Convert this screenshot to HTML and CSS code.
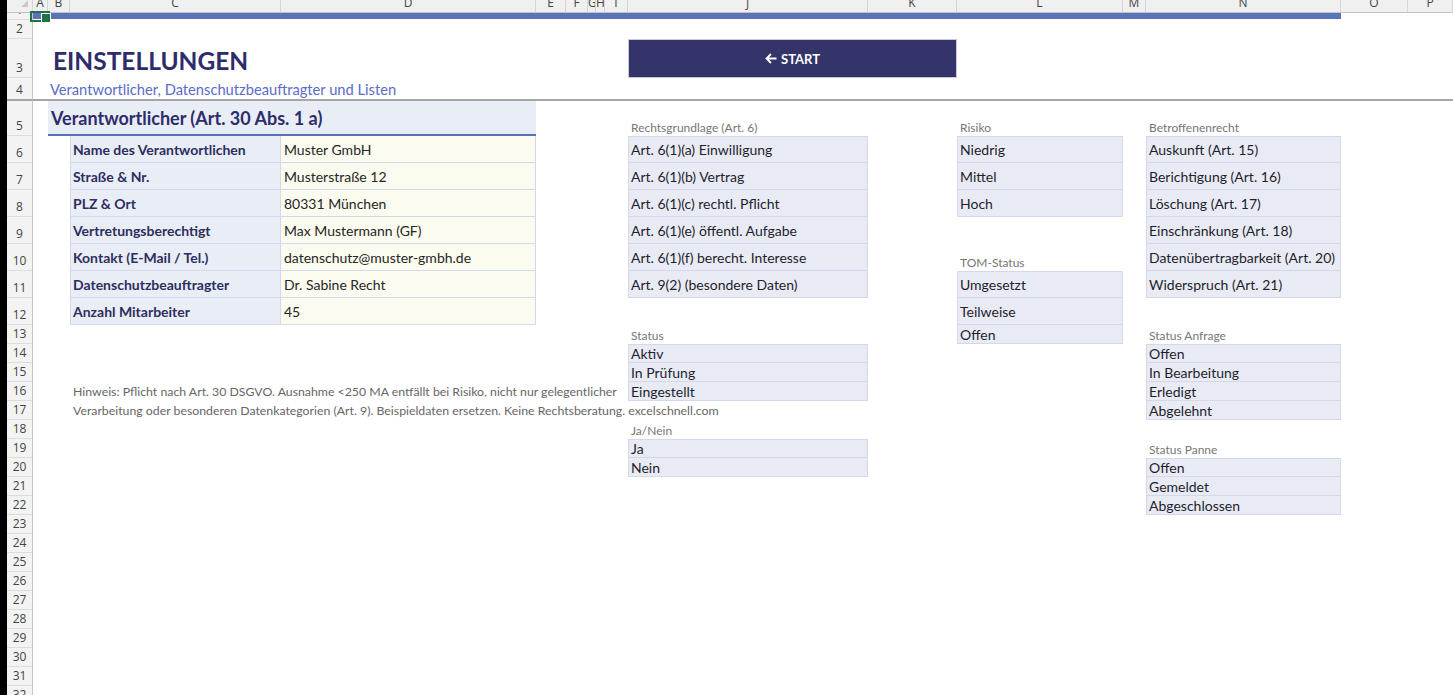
FILE: index.html
```html
<!DOCTYPE html>
<html lang="de">
<head>
    <meta charset="UTF-8">
    <meta name="viewport" content="width=device-width, initial-scale=1.0">
    <title>Einstellungen</title>
    <link rel="stylesheet" href="styles.css">
</head>
<body>
    <div class="window">
        <div class="edge"></div>
        <div class="sheet">
            <!-- Spaltenköpfe -->
            <div class="ch corner"></div>
            <div class="ch">A</div>
            <div class="ch">B</div>
            <div class="ch">C</div>
            <div class="ch">D</div>
            <div class="ch">E</div>
            <div class="ch">F</div>
            <div class="ch">G</div>
            <div class="ch">H</div>
            <div class="ch">I</div>
            <div class="ch">J</div>
            <div class="ch">K</div>
            <div class="ch">L</div>
            <div class="ch">M</div>
            <div class="ch">N</div>
            <div class="ch">O</div>
            <div class="ch">P</div>

            <!-- Zeilenköpfe -->
            <div class="rh">1</div>
            <div class="rh">2</div>
            <div class="rh">3</div>
            <div class="rh thick">4</div>
            <div class="rh">5</div>
            <div class="rh">6</div>
            <div class="rh">7</div>
            <div class="rh">8</div>
            <div class="rh">9</div>
            <div class="rh">10</div>
            <div class="rh">11</div>
            <div class="rh">12</div>
            <div class="rh">13</div>
            <div class="rh">14</div>
            <div class="rh">15</div>
            <div class="rh">16</div>
            <div class="rh">17</div>
            <div class="rh">18</div>
            <div class="rh">19</div>
            <div class="rh">20</div>
            <div class="rh">21</div>
            <div class="rh">22</div>
            <div class="rh">23</div>
            <div class="rh">24</div>
            <div class="rh">25</div>
            <div class="rh">26</div>
            <div class="rh">27</div>
            <div class="rh">28</div>
            <div class="rh">29</div>
            <div class="rh">30</div>
            <div class="rh">31</div>
            <div class="rh">32</div>

            <div class="band"></div>
            <div class="sel"></div>
            <div class="rule"></div>

            <!-- Kopfbereich -->
            <h1 class="title">EINSTELLUNGEN</h1>
            <button class="start">
                <svg width="12" height="11" viewBox="0 0 12 11"><path d="M6 1 L1.5 5.5 L6 10 M1.5 5.5 H11.5" fill="none" stroke="#fff" stroke-width="1.8"/></svg>
                START
            </button>
            <div class="subtitle">Verantwortlicher, Datenschutzbeauftragter und Listen</div>

            <!-- Verantwortlicher -->
            <div class="section">Verantwortlicher (Art. 30 Abs. 1 a)</div>
            <div class="lab r6">Name des Verantwortlichen</div>
            <div class="val r6">Muster GmbH</div>
            <div class="lab r7">Straße &amp; Nr.</div>
            <div class="val r7">Musterstraße 12</div>
            <div class="lab r8">PLZ &amp; Ort</div>
            <div class="val r8">80331 München</div>
            <div class="lab r9">Vertretungsberechtigt</div>
            <div class="val r9">Max Mustermann (GF)</div>
            <div class="lab r10">Kontakt (E-Mail / Tel.)</div>
            <div class="val r10">datenschutz@muster-gmbh.de</div>
            <div class="lab r11">Datenschutzbeauftragter</div>
            <div class="val r11">Dr. Sabine Recht</div>
            <div class="lab r12">Anzahl Mitarbeiter</div>
            <div class="val r12">45</div>

            <div class="note r16">Hinweis: Pflicht nach Art. 30 DSGVO. Ausnahme &lt;250 MA entfällt bei Risiko, nicht nur gelegentlicher</div>
            <div class="note r17">Verarbeitung oder besonderen Datenkategorien (Art. 9). Beispieldaten ersetzen. Keine Rechtsberatung. excelschnell.com</div>

            <!-- Listen Spalte J -->
            <div class="cap cj r5">Rechtsgrundlage (Art. 6)</div>
            <div class="li cj r6 top">Art. 6(1)(a) Einwilligung</div>
            <div class="li cj r7">Art. 6(1)(b) Vertrag</div>
            <div class="li cj r8">Art. 6(1)(c) rechtl. Pflicht</div>
            <div class="li cj r9">Art. 6(1)(e) öffentl. Aufgabe</div>
            <div class="li cj r10">Art. 6(1)(f) berecht. Interesse</div>
            <div class="li cj r11">Art. 9(2) (besondere Daten)</div>

            <div class="cap cj r13">Status</div>
            <div class="li cj r14 top">Aktiv</div>
            <div class="li cj r15">In Prüfung</div>
            <div class="li cj r16">Eingestellt</div>

            <div class="cap cj r18">Ja/Nein</div>
            <div class="li cj r19 top">Ja</div>
            <div class="li cj r20">Nein</div>

            <!-- Listen Spalte L -->
            <div class="cap cl r5">Risiko</div>
            <div class="li cl r6 top">Niedrig</div>
            <div class="li cl r7">Mittel</div>
            <div class="li cl r8">Hoch</div>

            <div class="cap cl r10">TOM-Status</div>
            <div class="li cl r11 top">Umgesetzt</div>
            <div class="li cl r12">Teilweise</div>
            <div class="li cl r13">Offen</div>

            <!-- Listen Spalte N -->
            <div class="cap cn r5">Betroffenenrecht</div>
            <div class="li cn r6 top">Auskunft (Art. 15)</div>
            <div class="li cn r7">Berichtigung (Art. 16)</div>
            <div class="li cn r8">Löschung (Art. 17)</div>
            <div class="li cn r9">Einschränkung (Art. 18)</div>
            <div class="li cn r10">Datenübertragbarkeit (Art. 20)</div>
            <div class="li cn r11">Widerspruch (Art. 21)</div>

            <div class="cap cn r13">Status Anfrage</div>
            <div class="li cn r14 top">Offen</div>
            <div class="li cn r15">In Bearbeitung</div>
            <div class="li cn r16">Erledigt</div>
            <div class="li cn r17">Abgelehnt</div>

            <div class="cap cn r19">Status Panne</div>
            <div class="li cn r20 top">Offen</div>
            <div class="li cn r21">Gemeldet</div>
            <div class="li cn r22">Abgeschlossen</div>
        </div>
    </div>
</body>
</html>
```

FILE: styles.css
```css
* {
    box-sizing: border-box;
}
body {
    margin: 0;
    background: #fff;
    font-family: Lato, "Liberation Sans", sans-serif;
    color: #1f1f2e;
    overflow: hidden;
}
.window {
    display: flex;
    height: 695px;
}
.edge {
    flex: none;
    width: 7px;
    background: #000;
}

/* Tabellenblatt: Spalten und Zeilen wie in Excel */
.sheet {
    flex: 1;
    display: grid;
    grid-template-columns:
        [rh] 26px [a] 15px [b] 22px [c] 211px [d] 255px [e] 30px [f] 22px
        [g] 8px [h] 9px [i] 23px [j] 240px [k] 89px [l] 166px [m] 23px
        [n] 195px [o] 67px [p] 1fr;
    grid-template-rows:
        [hdr] 13px [r1] 7px [r2] 19px [r3] 39px [r4] 23px [r5] 35px
        [r6] 27px [r7] 27px [r8] 27px [r9] 27px [r10] 27px [r11] 27px [r12] 27px
        [r13] 19px [r14] 19px [r15] 19px [r16] 19px [r17] 19px [r18] 19px
        [r19] 19px [r20] 19px [r21] 19px [r22] 19px repeat(10, 19px);
}

.ch {
    grid-row: hdr;
    background: #f0f0f0;
    border-right: 1px solid #d6d6d6;
    border-bottom: 1px solid #c2c2c2;
    font: 12px "Open Sans", sans-serif;
    line-height: 5px;
    color: #444;
    text-align: center;
    white-space: nowrap;
    overflow: hidden;
}
.corner {
    position: relative;
}
.corner::after {
    content: "";
    position: absolute;
    right: 4px;
    top: 0;
    border-left: 7px solid transparent;
    border-bottom: 7px solid #cbcbcb;
}
.rh {
    grid-column: rh;
    display: flex;
    align-items: flex-end;
    justify-content: center;
    padding-bottom: 2px;
    background: #f3f3f3;
    border-right: 1px solid #c6c6c6;
    border-bottom: 1px solid #dcdcdc;
    font: 12px "Open Sans", sans-serif;
    line-height: 14px;
    color: #444;
    overflow: hidden;
}
.rh.thick {
    border-bottom: 2px solid #a6a6a6;
}

.band {
    grid-column: a / o;
    grid-row: r1;
    margin-bottom: 1px;
    background: #5b72bd;
}
.sel {
    grid-column: a;
    grid-row: r1;
    position: relative;
}
.sel::before {
    content: "";
    position: absolute;
    left: -3px;
    right: -2px;
    top: -2px;
    bottom: -2px;
    border: 2px solid #1f7244;
}
.sel::after {
    content: "";
    position: absolute;
    right: -3px;
    bottom: -3px;
    width: 8px;
    height: 8px;
    background: #1f7244;
    border: 1px solid #fff;
}
.rule {
    grid-column: a / -1;
    grid-row: r4;
    align-self: end;
    height: 2px;
    background: #a6a6a6;
}

.title {
    grid-column: b / j;
    grid-row: r3;
    align-self: end;
    margin: 0 0 5px;
    padding-left: 5px;
    font-size: 24.5px;
    font-weight: 700;
    line-height: 24px;
    color: #2e2c6b;
}
.start {
    grid-column: j / l;
    grid-row: r3;
    display: flex;
    align-items: center;
    justify-content: center;
    gap: 4px;
    padding: 0;
    background: #35346a;
    border: 1px solid #c9c9d9;
    color: #fff;
    font-family: Lato, sans-serif;
    font-size: 13px;
    font-weight: 700;
}
.subtitle {
    grid-column: b / j;
    grid-row: r4;
    align-self: end;
    padding: 0 0 4px 2px;
    font-size: 14.7px;
    line-height: 16px;
    color: #5a6cc8;
    white-space: nowrap;
}

.section {
    grid-column: b / e;
    grid-row: r5;
    display: flex;
    align-items: center;
    padding-left: 3px;
    background: #e9edf6;
    border-bottom: 2px solid #5b6fc0;
    font-size: 18px;
    font-weight: 700;
    color: #2e2c6b;
}
.lab,
.val {
    display: flex;
    align-items: center;
    padding-left: 3px;
    font-size: 14px;
    border-right: 1px solid #d4d9ea;
    border-bottom: 1px solid #d4d9ea;
    white-space: nowrap;
}
.lab {
    grid-column: c;
    padding-left: 2px;
    background: #e9edf6;
    border-left: 1px solid #d4d9ea;
    font-weight: 700;
    color: #2e2e60;
}
.val {
    grid-column: d;
    background: #fbfbef;
    color: #262626;
}
.note {
    grid-column: c / j;
    align-self: center;
    padding-left: 3px;
    font-size: 12.3px;
    color: #666;
    white-space: nowrap;
}

.cap {
    align-self: end;
    padding: 0 0 1px 3px;
    font-size: 12px;
    line-height: 14px;
    color: #767676;
    white-space: nowrap;
}
.li {
    display: flex;
    align-items: center;
    padding-left: 2px;
    background: #e9ebf4;
    border: 1px solid #d3d8ea;
    border-top: 0;
    font-size: 14px;
    color: #1e1e2e;
    white-space: nowrap;
}
.li.top {
    border-top: 1px solid #d3d8ea;
}

/* Zellbezüge */
.cj { grid-column: j; }
.cl { grid-column: l; }
.cn { grid-column: n; }
.r5 { grid-row: r5; }
.r6 { grid-row: r6; }
.r7 { grid-row: r7; }
.r8 { grid-row: r8; }
.r9 { grid-row: r9; }
.r10 { grid-row: r10; }
.r11 { grid-row: r11; }
.r12 { grid-row: r12; }
.r13 { grid-row: r13; }
.r14 { grid-row: r14; }
.r15 { grid-row: r15; }
.r16 { grid-row: r16; }
.r17 { grid-row: r17; }
.r18 { grid-row: r18; }
.r19 { grid-row: r19; }
.r20 { grid-row: r20; }
.r21 { grid-row: r21; }
.r22 { grid-row: r22; }
```
